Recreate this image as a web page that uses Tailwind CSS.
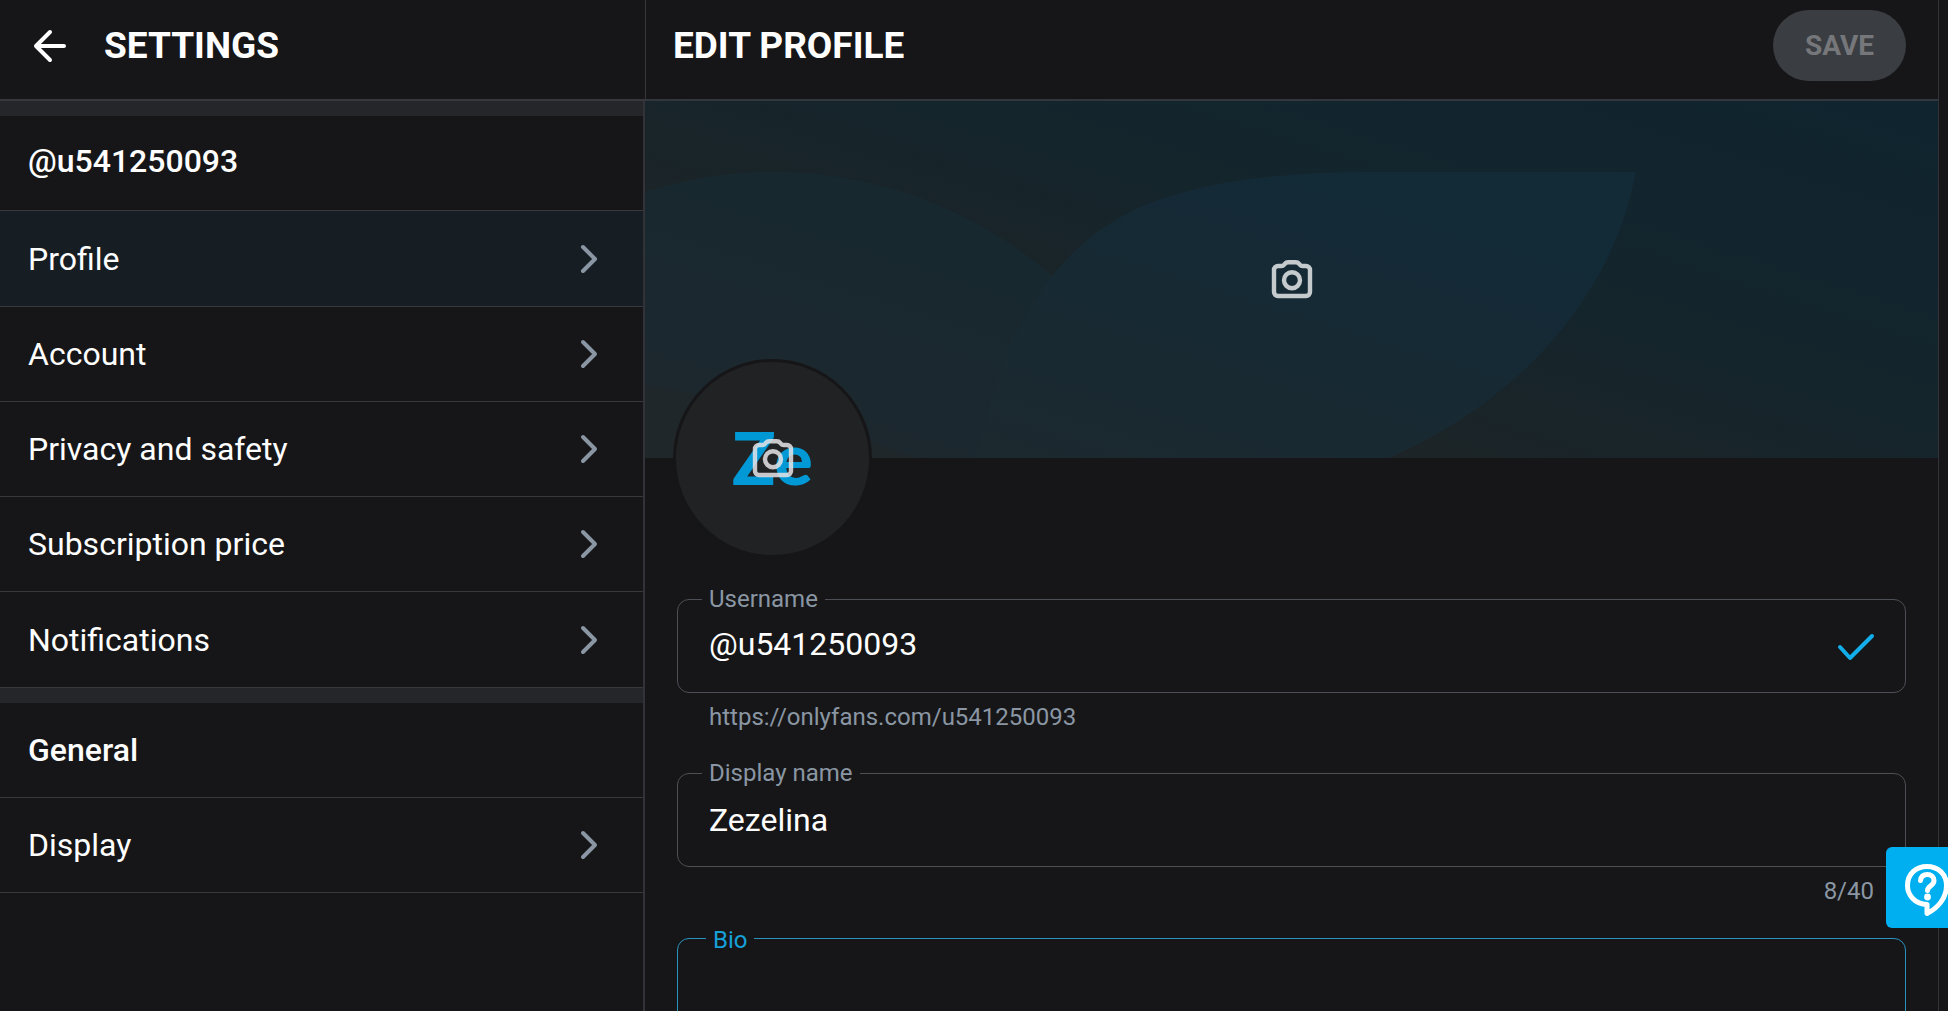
<!DOCTYPE html>
<html lang="en">
  <head>
    <meta charset="UTF-8" />
    <meta name="viewport" content="width=device-width, initial-scale=1.0" />
    <title>Edit profile</title>
    <script src="https://cdn.jsdelivr.net/npm/@tailwindcss/browser@4"></script>
  </head>
  <body class="flex h-screen overflow-hidden bg-[#161618] font-[Roboto,sans-serif] text-[#fefefe]">
    <!-- Shared icons -->
    <svg class="hidden">
      <symbol id="chevron" viewBox="0 0 24 32" fill="none" stroke="currentColor" stroke-width="4" stroke-linecap="round" stroke-linejoin="round">
        <path d="M6 4l12 12L6 28" />
      </symbol>
      <symbol id="camera" viewBox="0 0 24 24" fill="none" stroke="currentColor" stroke-width="2.2" stroke-linejoin="round">
        <path d="M5 5h1.6c.7 0 1.1-.2 1.5-.7l.3-.4c.5-.6 1-.8 1.700-.8h3.800c.7 0 1.200.2 1.700.8l.3.4c.4.5.8.7 1.500.7H19a2 2 0 0 1 2 2v11a2 2 0 0 1-2 2H5a2 2 0 0 1-2-2V7a2 2 0 0 1 2-2z" />
        <circle cx="12" cy="12.1" r="4" />
      </symbol>
    </svg>

    <!-- Settings menu -->
    <aside class="flex w-[645px] shrink-0 flex-col">
      <header class="-mr-px flex h-[101px] shrink-0 items-center gap-8 border-r border-b-2 border-[#37373c] pb-2 pl-7">
        <a href="#" aria-label="Back">
          <svg class="h-11 w-11" viewBox="0 0 44 44" fill="none" stroke="currentColor" stroke-width="4" stroke-linecap="round" stroke-linejoin="round">
            <path d="M36 22H8M22 8L8 22l14 14" />
          </svg>
        </a>
        <h1 class="text-[37px] leading-12 font-bold">SETTINGS</h1>
      </header>
      <nav class="flex-1 border-r-2 border-[#323338] text-[32px]">
        <div class="h-[15px] bg-[#25262a]"></div>
        <h2 class="flex h-[95px] items-center border-b border-[#37383c] pb-1 pl-7 font-medium">@u541250093</h2>
        <a href="#" aria-current="page" class="flex h-24 items-center justify-between border-b border-[#37383c] bg-[#171e23] pr-[42px] pl-7">
          Profile <svg class="h-8 w-6 text-[#8a96a3]"><use href="#chevron" /></svg>
        </a>
        <a href="#" class="flex h-[95px] items-center justify-between border-b border-[#37383c] pr-[42px] pl-7">
          Account <svg class="h-8 w-6 text-[#8a96a3]"><use href="#chevron" /></svg>
        </a>
        <a href="#" class="flex h-[95px] items-center justify-between border-b border-[#37383c] pr-[42px] pl-7">
          Privacy and safety <svg class="h-8 w-6 text-[#8a96a3]"><use href="#chevron" /></svg>
        </a>
        <a href="#" class="flex h-[95px] items-center justify-between border-b border-[#37383c] pr-[42px] pl-7">
          Subscription price <svg class="h-8 w-6 text-[#8a96a3]"><use href="#chevron" /></svg>
        </a>
        <a href="#" class="flex h-24 items-center justify-between border-b border-[#37383c] pr-[42px] pl-7">
          Notifications <svg class="h-8 w-6 text-[#8a96a3]"><use href="#chevron" /></svg>
        </a>
        <div class="h-[15px] bg-[#25262a]"></div>
        <h2 class="flex h-[95px] items-center border-b border-[#37383c] pl-7 font-medium">General</h2>
        <a href="#" class="flex h-[95px] items-center justify-between border-b border-[#37383c] pr-[42px] pl-7">
          Display <svg class="h-8 w-6 text-[#8a96a3]"><use href="#chevron" /></svg>
        </a>
      </nav>
    </aside>

    <!-- Profile form -->
    <main class="mr-[9px] min-w-0 flex-1 border-r border-[#323338]">
      <header class="flex h-[101px] items-center justify-between border-b-2 border-[#32373d] pr-8 pb-2 pl-7">
        <h1 class="text-[37px] leading-12 font-bold">EDIT PROFILE</h1>
        <button type="button" disabled class="h-[71px] rounded-full bg-[#3a3d42] px-8 text-[28px] font-bold text-[#76777a]">SAVE</button>
      </header>

      <div class="relative h-[357px]">
        <svg class="absolute inset-0 h-full w-full" viewBox="0 0 1292 357" preserveAspectRatio="none">
          <defs>
            <linearGradient id="base" gradientUnits="userSpaceOnUse" x1="-30" y1="95" x2="114" y2="-361">
              <stop offset="0" stop-color="#1c2427" />
              <stop offset=".4" stop-color="#14252c" />
              <stop offset="1" stop-color="#10242f" />
            </linearGradient>
            <linearGradient id="disc" gradientUnits="userSpaceOnUse" x1="-90" y1="285" x2="30" y2="-95">
              <stop offset="0" stop-color="#1d282e" />
              <stop offset="1" stop-color="#152830" />
            </linearGradient>
            <linearGradient id="leaf" gradientUnits="userSpaceOnUse" x1="-68" y1="216" x2="36" y2="-114">
              <stop offset="0" stop-color="#1c292f" />
              <stop offset="1" stop-color="#132a37" />
            </linearGradient>
          </defs>
          <path fill="url(#base)" d="M0 0h1292v357H0z" />
          <circle fill="url(#disc)" cx="128" cy="497" r="426" />
          <path fill="#20272a" d="M0 284C90 298 180 322 270 357H0z" />
          <path fill="url(#leaf)" d="M990 71H722C640 71 560 80 502 103C452 124 425 153 405 177C385 206 368 235 355 267L330 357H743C880 297 968 190 990 71z" />
        </svg>
        <button type="button" aria-label="Upload cover" class="absolute inset-0 flex items-center justify-center text-[#c5cacd]">
          <svg class="h-12 w-12"><use href="#camera" /></svg>
        </button>
        <button type="button" aria-label="Upload avatar" class="absolute -bottom-[100px] left-7 flex h-[199px] w-[199px] items-center justify-center rounded-full border-3 border-[#161618] bg-[#202224]">
          <span class="pb-1 font-[Lato,sans-serif] text-[72px] leading-none font-black text-[#0099d6]">Ze</span>
          <svg class="absolute h-12 w-12 text-[#e8e4e6]/85"><use href="#camera" /></svg>
        </button>
      </div>

      <form class="pt-[141px] pr-8 pl-8">
        <div class="relative">
          <label for="username" class="absolute -top-4 left-[25px] bg-[#161618] px-[7px] text-[24px] leading-8 text-[#8a96a3]">Username</label>
          <input id="username" type="text" value="@u541250093" class="block h-[94px] w-full rounded-xl border border-[#4c4f55] bg-transparent pr-20 pb-1 pl-[31px] text-[32px] outline-none" />
          <svg class="absolute top-7 right-7 h-10 w-11" viewBox="0 0 44 40" fill="none" stroke="#12aeea" stroke-width="4" stroke-linecap="round" stroke-linejoin="round">
            <path d="M6 20l10 11L38 9" />
          </svg>
        </div>
        <p class="pt-2 pl-8 text-[24px] leading-8 text-[#8a96a3]">https://onlyfans.com/u541250093</p>

        <div class="relative mt-10">
          <label for="name" class="absolute -top-4 left-[25px] bg-[#161618] px-[7px] text-[24px] leading-8 text-[#8a96a3]">Display name</label>
          <input id="name" type="text" value="Zezelina" maxlength="40" class="block h-[94px] w-full rounded-xl border border-[#4c4f55] bg-transparent px-[31px] text-[32px] outline-none" />
        </div>
        <p class="pt-2 pr-8 text-right text-[24px] leading-8 text-[#8a96a3]">8/40</p>

        <div class="relative mt-[31px]">
          <label for="bio" class="absolute -top-3.5 left-[29px] bg-[#161618] px-[7px] text-[24px] leading-8 text-[#16a0d8]">Bio</label>
          <textarea id="bio" class="block h-48 w-full resize-none rounded-xl border border-[#2a93bd] bg-transparent px-8 py-6 text-[32px] outline-none"></textarea>
        </div>
      </form>
    </main>

    <!-- Help widget, runs off the right edge -->
    <button type="button" aria-label="Help" class="fixed right-0 bottom-[83px] h-[81px] w-[62px] overflow-hidden rounded-l-md bg-[#00aff0]">
      <svg class="ml-4 h-[60px] w-[52px]" viewBox="0 0 52 60" fill="none" stroke="#fff" stroke-width="5" stroke-linejoin="round">
        <path d="M25 46.500C13 46.500 5.500 37 5.500 27.500C5.500 16 14 8.500 25 8.500C36 8.500 44.500 16 44.500 27.500C44.500 40 36 50 25 55.500z" />
        <path stroke-linecap="round" d="M18.500 22.500C19 18 22 16.500 25.500 16.500C29 16.500 32 19 32 22.500C32 28 25.500 28 25.500 32.500" />
        <circle cx="25.500" cy="39" r="3.400" fill="#fff" stroke="none" />
      </svg>
    </button>
  </body>
</html>
